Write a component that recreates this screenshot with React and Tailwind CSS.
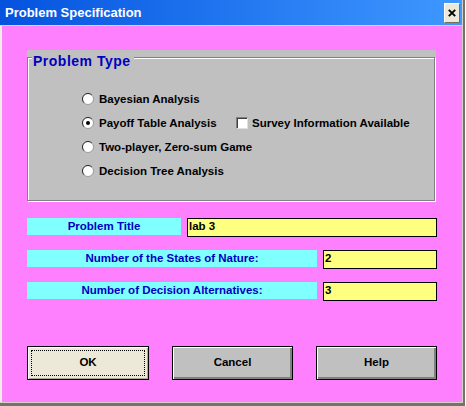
import React from 'react';

const font = "font-['Liberation_Sans',Arial,sans-serif]";

function Radio({ checked }) {
  return (
    <svg width="12" height="12" viewBox="0 0 12 12" className="shrink-0">
      <circle cx="6" cy="6" r="5.5" fill="#fff" />
      <path d="M2.1 9.9A5.5 5.5 0 0 1 9.9 2.1" fill="none" stroke="#202020" />
      <path d="M9.9 2.1A5.5 5.5 0 0 1 2.1 9.9" fill="none" stroke="#9a9a9a" />
      {checked && <circle cx="6" cy="6" r="2" fill="#000" />}
    </svg>
  );
}

function RadioRow({ label, checked, children }) {
  return (
    <div className="h-[24px] flex items-center">
      <div className="w-[154px] flex items-center gap-[5px]">
        <Radio checked={checked} />
        <span className="text-[11.5px] leading-[14px] font-bold text-black whitespace-nowrap">{label}</span>
      </div>
      {children}
    </div>
  );
}

function Field({ label, value, labelWidth, inputWidth }) {
  return (
    <div className="flex items-start gap-[6px]">
      <div
        className="h-[17px] bg-[#80ffff] text-[#0000c0] text-[11.5px] leading-[14px] font-bold text-center pt-[1px]"
        style={{ width: labelWidth }}
      >
        {label}
      </div>
      <div
        className="h-[19px] border border-black bg-[#ffff80] text-black text-[11.5px] leading-[15px] font-bold pl-[1px]"
        style={{ width: inputWidth }}
      >
        {value}
      </div>
    </div>
  );
}

export default function App() {
  return (
    <div className={`w-[466px] h-[406px] bg-white ${font}`}>
      <div className="w-[465px] h-[406px] border-r-2 border-b-[3px] border-[#74736a]">
        <div className="h-full flex flex-col border-r border-b border-[#d4d0c8]">
          {/* title bar */}
          <div className="h-[26px] shrink-0 flex items-center justify-between bg-linear-to-r from-[#0552df] to-[#3f98ff] border-b border-[#c8d8f0] pl-[5px] pr-[2px]">
            <span className="text-white text-[13px] font-bold leading-[25px]">Problem Specification</span>
            <div className="w-[16px] h-[20px] bg-[#ece9d8] border border-t-white border-l-white border-r-[#716f64] border-b-[#716f64] flex items-center justify-center">
              <svg width="8" height="8" viewBox="0 0 8 8">
                <path d="M0.8 0.8L7.2 7.2M7.2 0.8L0.8 7.2" stroke="#000" strokeWidth="1.9" />
              </svg>
            </div>
          </div>

          {/* body */}
          <div className="flex-1 bg-[#ff80ff] border-l-2 border-[#f0eee4] pl-[25px] pt-[24px]">
            <div className="w-[409px] h-[152px] bg-[#c0c0c0] pt-[7px]">
              <div className="relative w-[408px] h-[144px] border border-[#808080] shadow-[inset_1px_1px_0_#fff,1px_1px_0_#fff] pl-[54px] pt-[29px]">
                <span className="absolute left-[4px] top-[-5px] bg-[#c0c0c0] px-[1px] pr-[3px] text-[14px] leading-[16px] font-bold text-[#0000c0] tracking-[0.5px]">
                  Problem Type
                </span>
                <RadioRow label="Bayesian Analysis" />
                <RadioRow label="Payoff Table Analysis" checked>
                  <div className="flex items-center gap-[4px]">
                    <div className="w-[12px] h-[12px] bg-white border border-t-[#808080] border-l-[#808080] border-r-[#e0e0e0] border-b-[#e0e0e0] shadow-[inset_1px_1px_0_#404040]" />
                    <span className="text-[11.5px] leading-[14px] font-bold text-black whitespace-nowrap">
                      Survey Information Available
                    </span>
                  </div>
                </RadioRow>
                <RadioRow label="Two-player, Zero-sum Game" />
                <RadioRow label="Decision Tree Analysis" />
              </div>
            </div>

            <div className="mt-[16px] flex flex-col gap-[13px]">
              <Field label="Problem Title" value="lab 3" labelWidth={154} inputWidth={250} />
              <Field label="Number of the States of Nature:" value="2" labelWidth={290} inputWidth={114} />
              <Field label="Number of Decision Alternatives:" value="3" labelWidth={290} inputWidth={114} />
            </div>

            <div className="mt-[45px] flex gap-[23px] text-[11.5px] font-bold text-black">
              <div className="w-[122px] h-[34px] border border-black bg-[#ece9d8] shadow-[inset_1px_1px_0_#fff,inset_-1px_-1px_0_#aca899] p-[3px]">
                <div className="h-full border border-dotted border-black flex items-center justify-center">OK</div>
              </div>
              <div className="w-[121px] h-[34px] border border-black bg-[#c0c0c0] shadow-[inset_1px_1px_0_#fff,inset_-2px_-2px_0_#808080] flex items-center justify-center">
                Cancel
              </div>
              <div className="w-[121px] h-[34px] border border-black bg-[#c0c0c0] shadow-[inset_1px_1px_0_#fff,inset_-2px_-2px_0_#808080] flex items-center justify-center">
                Help
              </div>
            </div>
          </div>
        </div>
      </div>
    </div>
  );
}
